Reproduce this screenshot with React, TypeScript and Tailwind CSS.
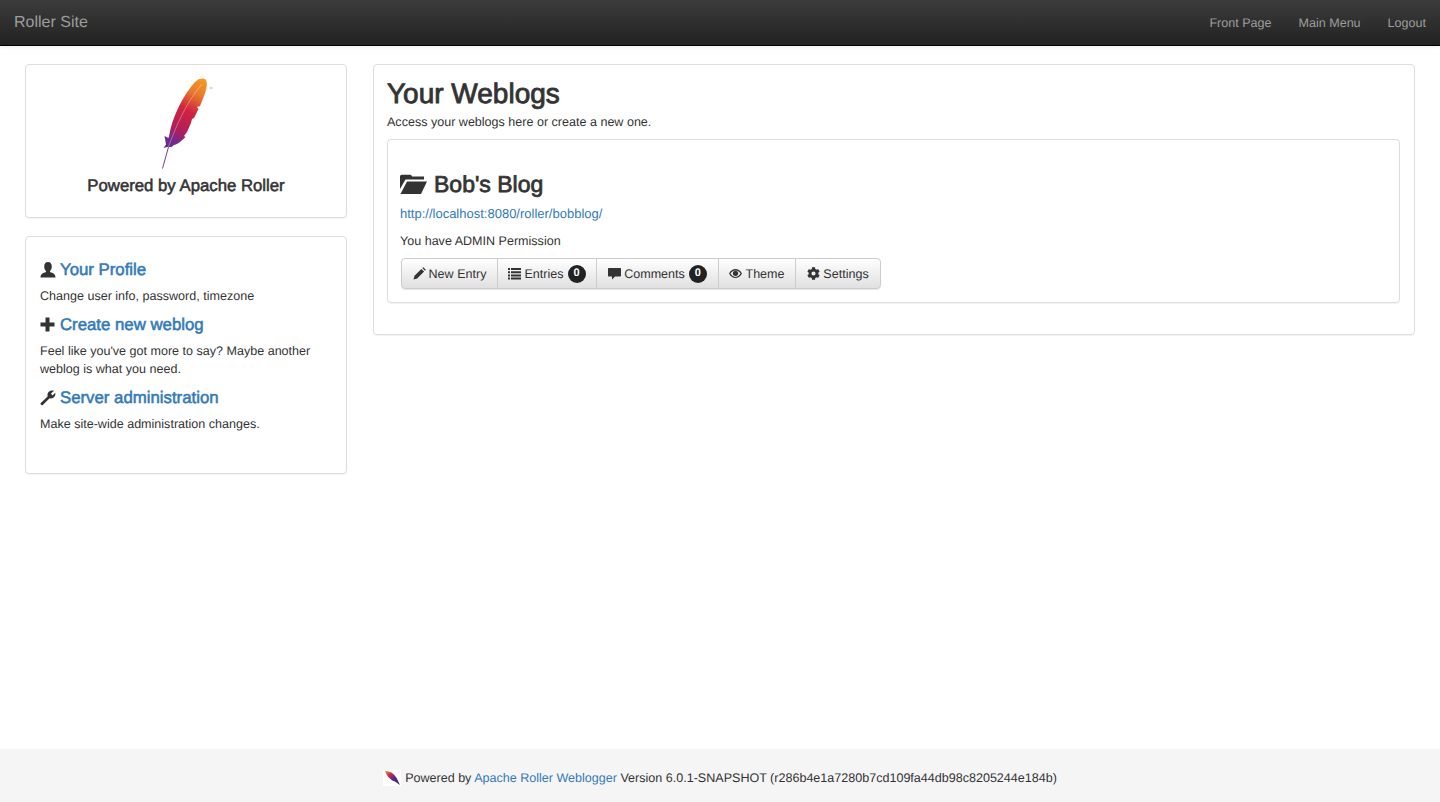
import { FaCog } from 'react-icons/fa';

function Feather({ className }: { className?: string }) {
  return (
    <svg viewBox="160 76 54 93" className={className}>
      <defs>
        <linearGradient id="feather" gradientUnits="userSpaceOnUse" x1="205" y1="78" x2="166" y2="148">
          <stop offset="0" stopColor="#f89c20" />
          <stop offset="0.22" stopColor="#e97a2c" />
          <stop offset="0.45" stopColor="#d02440" />
          <stop offset="0.72" stopColor="#b01e5a" />
          <stop offset="0.88" stopColor="#702c90" />
          <stop offset="1" stopColor="#5f2d8c" />
        </linearGradient>
      </defs>
      <path
        d="M166 146 L162.5 147 L165 143.5 L163.5 135 L167.5 137 L168.5 133 C171 118 181 95 194 81 C198 77 203 76.5 205 79 C207 83 205 90 203 95 L199 105 L196 106 L197.5 108 L193 117 L191 118 L190 122 L186 131 L183 135 L184.5 136 C181 139 178 143 173 144 L170.5 146 Z"
        fill="url(#feather)"
      />
      <path d="M167 147 C175 125 186 100 201 83" stroke="#ffffff" strokeOpacity="0.55" strokeWidth="0.6" fill="none" />
      <path d="M161.5 167.5 L167.5 146" stroke="#5f2d8c" strokeWidth="0.9" fill="none" />
      <path d="M208.5 87 h3" stroke="#aaaaaa" strokeWidth="0.9" />
    </svg>
  );
}

function SmallFeather() {
  return (
    <svg viewBox="0 0 18 16" className="mr-[4px] h-[16px] w-[18px] bg-white">
      <defs>
        <linearGradient id="small-feather" x1="0" y1="0" x2="1" y2="1">
          <stop offset="0" stopColor="#f0a030" />
          <stop offset="0.3" stopColor="#c8284e" />
          <stop offset="0.6" stopColor="#4a2a90" />
          <stop offset="1" stopColor="#33205f" />
        </linearGradient>
      </defs>
      <path d="M2 1 C8 1 13 5 15 11 L17 15 L12 11.5 C8 10.5 3.5 6 2 1Z" fill="url(#small-feather)" />
    </svg>
  );
}

function Icon({ size, box, children }: { size: number; box: string; children: React.ReactNode }) {
  return (
    <svg viewBox={box} width={size} height={size} fill="currentColor" className="shrink-0">
      {children}
    </svg>
  );
}

const PencilIcon = () => (
  <Icon size={13} box="0 0 13 13">
    <path d="M0.5 12.5 L1.5 8.8 L8.4 1.9 L11.1 4.6 L4.2 11.5 Z M9.3 1 L10.3 0.2 L12.8 2.7 L12 3.7 Z" />
  </Icon>
);
const ListIcon = () => (
  <Icon size={13} box="0 0 13 13">
    <path d="M0 1h2v2H0z M3 1h10v2H3z M0 4.2h2v2H0z M3 4.2h10v2H3z M0 7.4h2v2H0z M3 7.4h10v2H3z M0 10.6h2v2H0z M3 10.6h10v2H3z" />
  </Icon>
);
const CommentIcon = () => (
  <Icon size={13} box="0 0 13 13">
    <path d="M1 1 H12 C12.6 1 13 1.4 13 2 V8.5 C13 9.1 12.6 9.5 12 9.5 H7 L4 12.5 V9.5 H1 C0.4 9.5 0 9.1 0 8.5 V2 C0 1.4 0.4 1 1 1Z" />
  </Icon>
);
const EyeIcon = () => (
  <Icon size={13} box="0 0 13 13">
    <path
      fillRule="evenodd"
      d="M0 6.5 C2 3 4 2 6.5 2 C9 2 11 3 13 6.5 C11 10 9 11 6.5 11 C4 11 2 10 0 6.5Z M6.5 3.4 C4 3.4 2.4 5.2 1.4 6.6 C2.4 8 4 10 6.5 10 C9 10 10.6 8 11.6 6.6 C10.6 5.2 9 3.4 6.5 3.4Z"
    />
    <circle cx="6.5" cy="6.3" r="2.6" />
  </Icon>
);
const UserIcon = () => (
  <Icon size={16} box="0 0 16 16">
    <path d="M8 0 C5.5 0 4.2 2 4.2 4.5 C4.2 6.5 5 8 6 9 L6 10 C3 11 0.5 12 0.5 15.5 H15.5 C15.5 12 13 11 10 10 L10 9 C11 8 11.8 6.5 11.8 4.5 C11.8 2 10.5 0 8 0Z" />
  </Icon>
);
const PlusIcon = () => (
  <Icon size={16} box="0 0 16 16">
    <path d="M5.5 0.5 h4 v5 h5 v4 h-5 v5 h-4 v-5 h-5 v-4 h5z" />
  </Icon>
);
const WrenchIcon = () => (
  <Icon size={16} box="0 0 16 16">
    <path d="M0.6 13.3 L7.6 6.6 C7 4 8 1.5 11 0.6 C12 0.3 13 0.4 14 0.7 L11 3.5 L12.5 5.5 L15.3 2.8 C16 6.5 13 9.2 9.6 8.3 L2.8 15 C1.8 15.8 0 14.4 0.6 13.3Z" />
  </Icon>
);

function FolderOpenIcon() {
  return (
    <svg viewBox="0 0 27 20" width={27} height={20} fill="currentColor" className="shrink-0">
      <path d="M7 7.5 H27 L21 20 H0.5 Z" />
      <path d="M0 15 V2.5 C0 1.5 0.8 0.8 1.8 0.8 H10 C11 0.8 11.8 1.5 12 2.5 H24 V5.5 H5.5 Z" />
    </svg>
  );
}

function Badge({ children }: { children: string }) {
  return (
    <span className="ml-[1px] inline-flex h-[18px] w-[18px] items-center justify-center rounded-full bg-[#222] text-[11px] leading-none font-bold text-white">
      {children}
    </span>
  );
}

const buttons = [
  { label: 'New Entry', icon: <PencilIcon />, width: 'w-[95px]' },
  { label: 'Entries', icon: <ListIcon />, badge: '0', width: 'w-[99px]' },
  { label: 'Comments', icon: <CommentIcon />, badge: '0', width: 'w-[122px]' },
  { label: 'Theme', icon: <EyeIcon />, width: 'w-[77px]' },
  { label: 'Settings', icon: <FaCog className="text-[13px]" />, width: 'w-[85px]' },
];

const actions = [
  { title: 'Your Profile', icon: <UserIcon />, text: ['Change user info, password, timezone'] },
  {
    title: 'Create new weblog',
    icon: <PlusIcon />,
    text: ["Feel like you've got more to say? Maybe another", 'weblog is what you need.'],
  },
  { title: 'Server administration', icon: <WrenchIcon />, text: ['Make site-wide administration changes.'] },
];

const heavy = '[-webkit-text-stroke:0.55px_currentColor]';

export default function App() {
  return (
    <div className="flex h-[802px] flex-col overflow-hidden bg-white font-['Liberation_Sans',Arial,sans-serif] text-[12.55px] leading-[18px] text-[#333] [text-rendering:geometricPrecision]">
      <nav className="flex h-[46px] shrink-0 items-center justify-between border-b border-black bg-gradient-to-b from-[#3c3c3c] to-[#222] px-[14px] shadow-[0_1px_4px_rgba(0,0,0,0.08)]">
        <a className="text-[16px] leading-[20px] text-[#9d9d9d]">Roller Site</a>
        <div className="flex gap-[27px] text-[#9d9d9d]">
          <a>Front Page</a>
          <a>Main Menu</a>
          <a>Logout</a>
        </div>
      </nav>

      <main className="flex flex-1 items-start gap-[26px] px-[25px] pt-[18px]">
        <aside className="flex w-[322px] shrink-0 flex-col gap-[18px]">
          <section className="flex h-[154px] flex-col items-center rounded border border-[#ddd] pt-[12px] shadow-[0_1px_1px_rgba(0,0,0,0.05)]">
            <Feather className="ml-[3px] h-[93px] w-[54px]" />
            <h4 className={`mt-[7px] text-[16.75px] leading-[18px] text-[#333] ${heavy}`}>Powered by Apache Roller</h4>
          </section>

          <section className="h-[238px] rounded border border-[#ddd] px-[14px] pt-[23px] shadow-[0_1px_1px_rgba(0,0,0,0.05)]">
            {actions.map((action) => (
              <div key={action.title} className="mb-[10px]">
                <h4 className={`flex items-center gap-[4px] text-[16.8px] leading-[20px] ${heavy}`}>
                  {action.icon}
                  <a className="text-[#337ab7]">{action.title}</a>
                </h4>
                <p className="mt-[7px]">
                  {action.text.map((line) => (
                    <span key={line} className="block">
                      {line}
                    </span>
                  ))}
                </p>
              </div>
            ))}
          </section>
        </aside>

        <section className="h-[271px] flex-1 rounded border border-[#ddd] pt-[14px] pr-[14px] pl-[13px] shadow-[0_1px_1px_rgba(0,0,0,0.05)]">
          <h2 className="text-[28px] leading-[30px] text-[#333] [-webkit-text-stroke:0.85px_currentColor]">Your Weblogs</h2>
          <p className="mt-[4px]">Access your weblogs here or create a new one.</p>

          <div className="mt-[8px] h-[164px] rounded border border-[#ddd] px-[12px] pt-[31px] shadow-[0_1px_1px_rgba(0,0,0,0.05)]">
            <h3 className="flex items-center gap-[7px] text-[23px] leading-[26px] [-webkit-text-stroke:0.75px_currentColor]">
              <FolderOpenIcon />
              Bob's Blog
            </h3>
            <p className="mt-[8px]">
              <a className="text-[13px] text-[#337ab7]">http://localhost:8080/roller/bobblog/</a>
            </p>
            <p className="mt-[9px]">You have ADMIN Permission</p>

            <div className="mt-[8px] ml-[1px] inline-flex h-[31px] rounded border border-[#ccc] bg-gradient-to-b from-[#fff] to-[#e0e0e0] shadow-[0_1px_1px_rgba(0,0,0,0.1)]">
              {buttons.map((button) => (
                <a
                  key={button.label}
                  className={`flex items-center justify-center gap-[3px] border-l border-[#ccc] text-[#333] first:border-l-0 ${button.width}`}
                >
                  {button.icon}
                  {button.label}
                  {button.badge && <Badge>{button.badge}</Badge>}
                </a>
              ))}
            </div>
          </div>
        </section>
      </main>

      <footer className="flex h-[53px] shrink-0 items-center justify-center bg-[#f5f5f5] pt-[4px]">
        <SmallFeather />
        <span>
          Powered by <a className="text-[#337ab7]">Apache Roller Weblogger</a> Version 6.0.1-SNAPSHOT
          (r286b4e1a7280b7cd109fa44db98c8205244e184b)
        </span>
      </footer>
    </div>
  );
}
